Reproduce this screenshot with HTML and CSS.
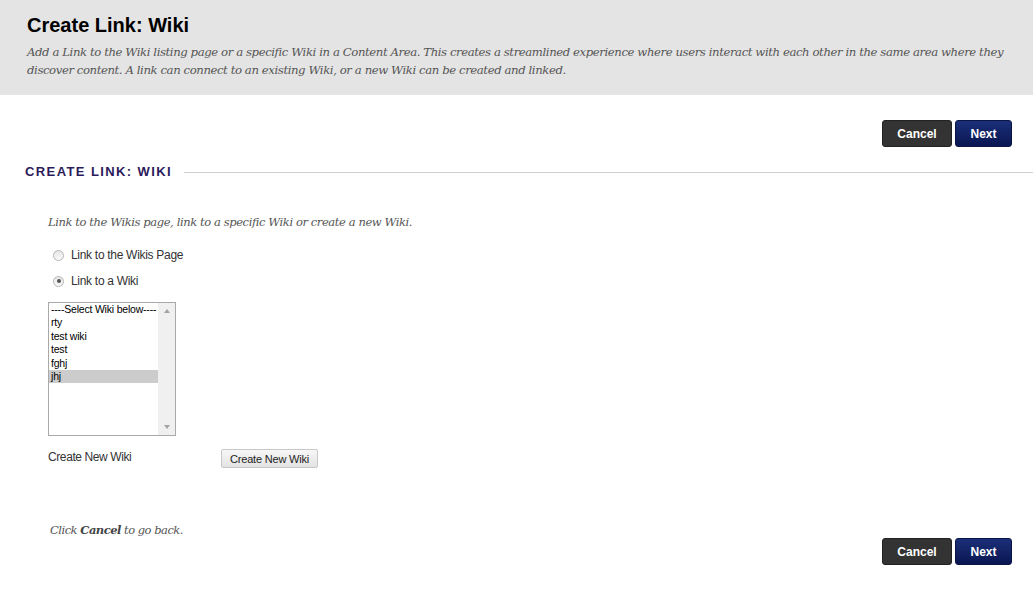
FILE: index.html
```html
<!DOCTYPE html>
<html>
<head>
<meta charset="utf-8">
<link rel="stylesheet" href="styles.css">
</head>
<body>
<div class="page-header">
  <h1 class="title">Create Link: Wiki</h1>
  <p class="desc">Add a Link to the Wiki listing page or a specific Wiki in a Content Area. This creates a streamlined experience where users interact with each other in the same area where they discover content. A link can connect to an existing Wiki, or a new Wiki can be created and linked.</p>
</div>
<div class="actions top">
  <button class="btn cancel">Cancel</button>
  <button class="btn next">Next</button>
</div>
<div class="section-head">
  <h2 class="section-title">CREATE LINK: WIKI</h2>
  <div class="rule"></div>
</div>
<div class="step">
  <p class="instr">Link to the Wikis page, link to a specific Wiki or create a new Wiki.</p>
  <label class="radio-row"><span class="radio"></span>Link to the Wikis Page</label>
  <label class="radio-row"><span class="radio checked"></span>Link to a Wiki</label>
  <div class="listbox">
    <ul class="options">
      <li>----Select Wiki below----</li>
      <li>rty</li>
      <li>test wiki</li>
      <li>test</li>
      <li>fghj</li>
      <li class="sel">jhj</li>
    </ul>
    <div class="scrollbar">
      <span class="arrow up"></span>
      <span class="arrow down"></span>
    </div>
  </div>
  <div class="create-row">
    <span class="create-label">Create New Wiki</span>
    <button class="small-btn">Create New Wiki</button>
  </div>
</div>
<div class="footer">
  <p class="back">Click <b>Cancel</b> to go back.</p>
  <div class="actions bottom">
    <button class="btn cancel">Cancel</button>
    <button class="btn next">Next</button>
  </div>
</div>
</body>
</html>
```
FILE: styles.css
```css
* { box-sizing: border-box; }
body {
  margin: 0;
  font-family: "Liberation Sans", Arial, sans-serif;
  background: #fff;
  color: #333;
}
.page-header {
  background: #e4e4e4;
  height: 95px;
  padding: 13px 10px 0 27px;
}
.title {
  margin: 0;
  font-size: 20px;
  font-weight: bold;
  color: #000;
  line-height: 24px;
}
.desc {
  margin: 6px 0 0;
  font-family: "DejaVu Serif", Georgia, serif;
  font-style: italic;
  font-size: 11.7px;
  line-height: 18px;
  color: #555;
  letter-spacing: -0.42px;
}
.actions {
  display: flex;
  justify-content: flex-end;
  gap: 3px;
  padding-right: 21px;
}
.actions.top { margin-top: 25px; }
.btn {
  height: 27px;
  border-radius: 3px;
  border: none;
  color: #fff;
  font-family: "Liberation Sans", Arial, sans-serif;
  font-weight: bold;
  font-size: 12px;
  padding: 0;
}
.cancel {
  width: 70px;
  background: #333;
  border: 1px solid #222;
}
.next {
  width: 57px;
  background: linear-gradient(#1b2f78, #0a1652);
  border: 1px solid #0a1446;
}
.section-head {
  display: flex;
  align-items: center;
  margin-top: 18px;
  padding-left: 25px;
  height: 14px;
}
.section-title {
  margin: 0;
  font-size: 13px;
  font-weight: bold;
  letter-spacing: 1.4px;
  color: #2c1b5a;
  line-height: 14px;
}
.rule {
  flex: 1;
  height: 1px;
  background: #cfcfcf;
  margin-left: 12px;
}
.step {
  padding-left: 48px;
  padding-top: 34px;
}
.instr {
  margin: 0 0 16px;
  font-family: "DejaVu Serif", Georgia, serif;
  font-style: italic;
  font-size: 11.5px;
  line-height: 18px;
  color: #555;
  letter-spacing: -0.4px;
}
.radio-row {
  display: flex;
  align-items: center;
  font-size: 12px;
  color: #333;
  height: 16px;
  margin-bottom: 10px;
  letter-spacing: -0.3px;
}
.radio {
  width: 11px;
  height: 11px;
  border-radius: 50%;
  border: 1px solid #b5b5b5;
  background: linear-gradient(#e6e6e6, #fafafa);
  margin: 0 7px 0 5px;
  position: relative;
}
.radio.checked::after {
  content: "";
  position: absolute;
  left: 2.5px;
  top: 2.5px;
  width: 4px;
  height: 4px;
  border-radius: 50%;
  background: #555;
}
.listbox {
  margin-top: 13px;
  width: 128px;
  height: 134px;
  border: 1px solid #a9a9a9;
  display: flex;
  background: #fff;
}
.options {
  list-style: none;
  margin: 0;
  padding: 0;
  flex: 1;
  font-size: 10.5px;
  color: #000;
  letter-spacing: -0.2px;
}
.options li {
  height: 13.4px;
  line-height: 13px;
  padding-left: 2px;
  white-space: nowrap;
}
.options li.sel { background: #cccccc; }
.scrollbar {
  width: 17px;
  background: #f0f0f0;
  display: flex;
  flex-direction: column;
  justify-content: space-between;
  align-items: center;
  padding: 6px 0;
}
.arrow {
  width: 0;
  height: 0;
  border-left: 3.5px solid transparent;
  border-right: 3.5px solid transparent;
}
.arrow.up { border-bottom: 4px solid #a3a3a3; }
.arrow.down { border-top: 4px solid #a3a3a3; }
.create-row {
  display: flex;
  align-items: center;
  margin-top: 13px;
}
.create-label {
  font-size: 12px;
  width: 173px;
  color: #333;
  letter-spacing: -0.4px;
  margin-top: -4px;
}
.small-btn {
  height: 19px;
  width: 97px;
  border: 1px solid #c8c8c8;
  border-radius: 2px;
  background: linear-gradient(#f7f7f7, #e3e3e3);
  font-family: "Liberation Sans", Arial, sans-serif;
  font-size: 11px;
  color: #222;
  padding: 0;
  letter-spacing: -0.2px;
}
.footer {
  margin-top: 53px;
}
.back {
  margin: 0 0 0 50px;
  font-family: "DejaVu Serif", Georgia, serif;
  font-style: italic;
  font-size: 11.5px;
  line-height: 18px;
  color: #555;
  letter-spacing: -0.5px;
}
.back b { color: #444; }
.actions.bottom { margin-top: -1px; }
```
